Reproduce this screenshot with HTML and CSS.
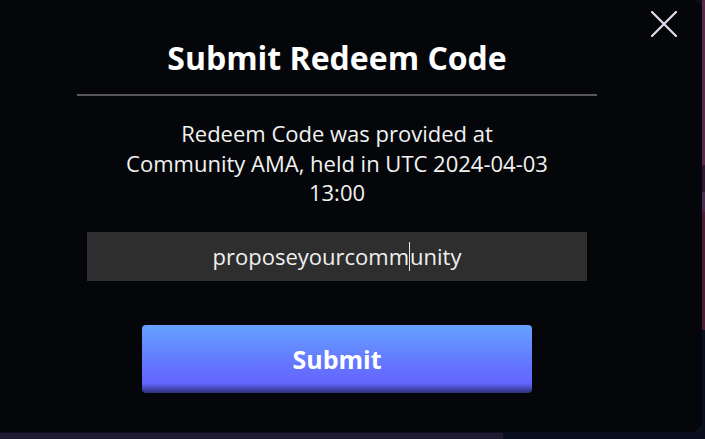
FILE: index.html
```html
<!DOCTYPE html>
<html lang="en">
<head>
<meta charset="utf-8">
<title>Submit Redeem Code</title>
<link rel="stylesheet" href="styles.css">
</head>
<body>
<div class="modal">
  <button class="close" aria-label="Close">
    <svg width="26" height="26" viewBox="0 0 26 26"><path d="M1 1 L25 25 M25 1 L1 25" stroke="#e4def0" stroke-width="2.2" stroke-linecap="round" fill="none"/></svg>
  </button>
  <div class="content">
    <h1 class="title">Submit Redeem Code</h1>
    <div class="divider"></div>
    <p class="desc">Redeem Code was provided at<br>Community AMA, held in UTC 2024-04-03 13:00</p>
    <div class="field"><span>proposeyourcomm</span><span class="caret"></span><span>unity</span></div>
    <button class="submit">Submit</button>
  </div>
</div>
</body>
</html>
```
FILE: styles.css
```css
html, body {
  margin: 0;
  padding: 0;
}
body {
  width: 705px;
  height: 439px;
  overflow: hidden;
  font-family: "Open Sans", "Noto Sans", sans-serif;
  background-color: #0a0f1e;
  background-image:
    linear-gradient(to bottom, #5a2a4c 0, #5a2a4c 165px, #2c1830 165px, #2c1830 192px, #4c2c4c 192px, #4c2c4c 212px, #4a1c38 212px, #4a1c38 330px, transparent 330px),
    linear-gradient(#1e1a30, #1e1a30);
  background-repeat: no-repeat;
  background-position: right top, left bottom;
  background-size: 3px 100%, 503px 6px;
}
.modal {
  position: relative;
  width: 702px;
  height: 432px;
  box-sizing: border-box;
  background: #050609;
  border-radius: 0 10px 12px 0;
  padding: 36px 0 0 77px;
}
.close {
  position: absolute;
  top: 11px;
  right: 25px;
  padding: 0;
  border: 0;
  background: none;
  width: 26px;
  height: 26px;
  display: flex;
}
.content {
  width: 520px;
  display: flex;
  flex-direction: column;
  align-items: center;
}
.title {
  margin: 0;
  font-size: 32px;
  line-height: 44px;
  font-weight: 700;
  color: #ffffff;
}
.divider {
  align-self: stretch;
  height: 2px;
  margin-top: 14px;
  background: #575757;
}
.desc {
  margin: 23px 0 0;
  max-width: 450px;
  text-align: center;
  font-size: 22px;
  line-height: 29.5px;
  color: #f2f2f2;
}
.field {
  margin-top: 24px;
  width: 500px;
  height: 49px;
  background: #2e2e2e;
  display: flex;
  align-items: center;
  justify-content: center;
  font-size: 22px;
  color: #f0f0f0;
}
.caret {
  width: 1px;
  height: 29px;
  background: #e8e8e8;
}
.submit {
  margin-top: 44px;
  width: 390px;
  height: 68px;
  border: 0;
  border-radius: 4px;
  font-family: inherit;
  font-size: 25px;
  font-weight: 700;
  color: #ffffff;
  background: linear-gradient(to bottom, #65a2ff 0%, #6474ff 60%, #6366ff 85%, #5052d0 91%, #2e2f78 100%);
}
```
